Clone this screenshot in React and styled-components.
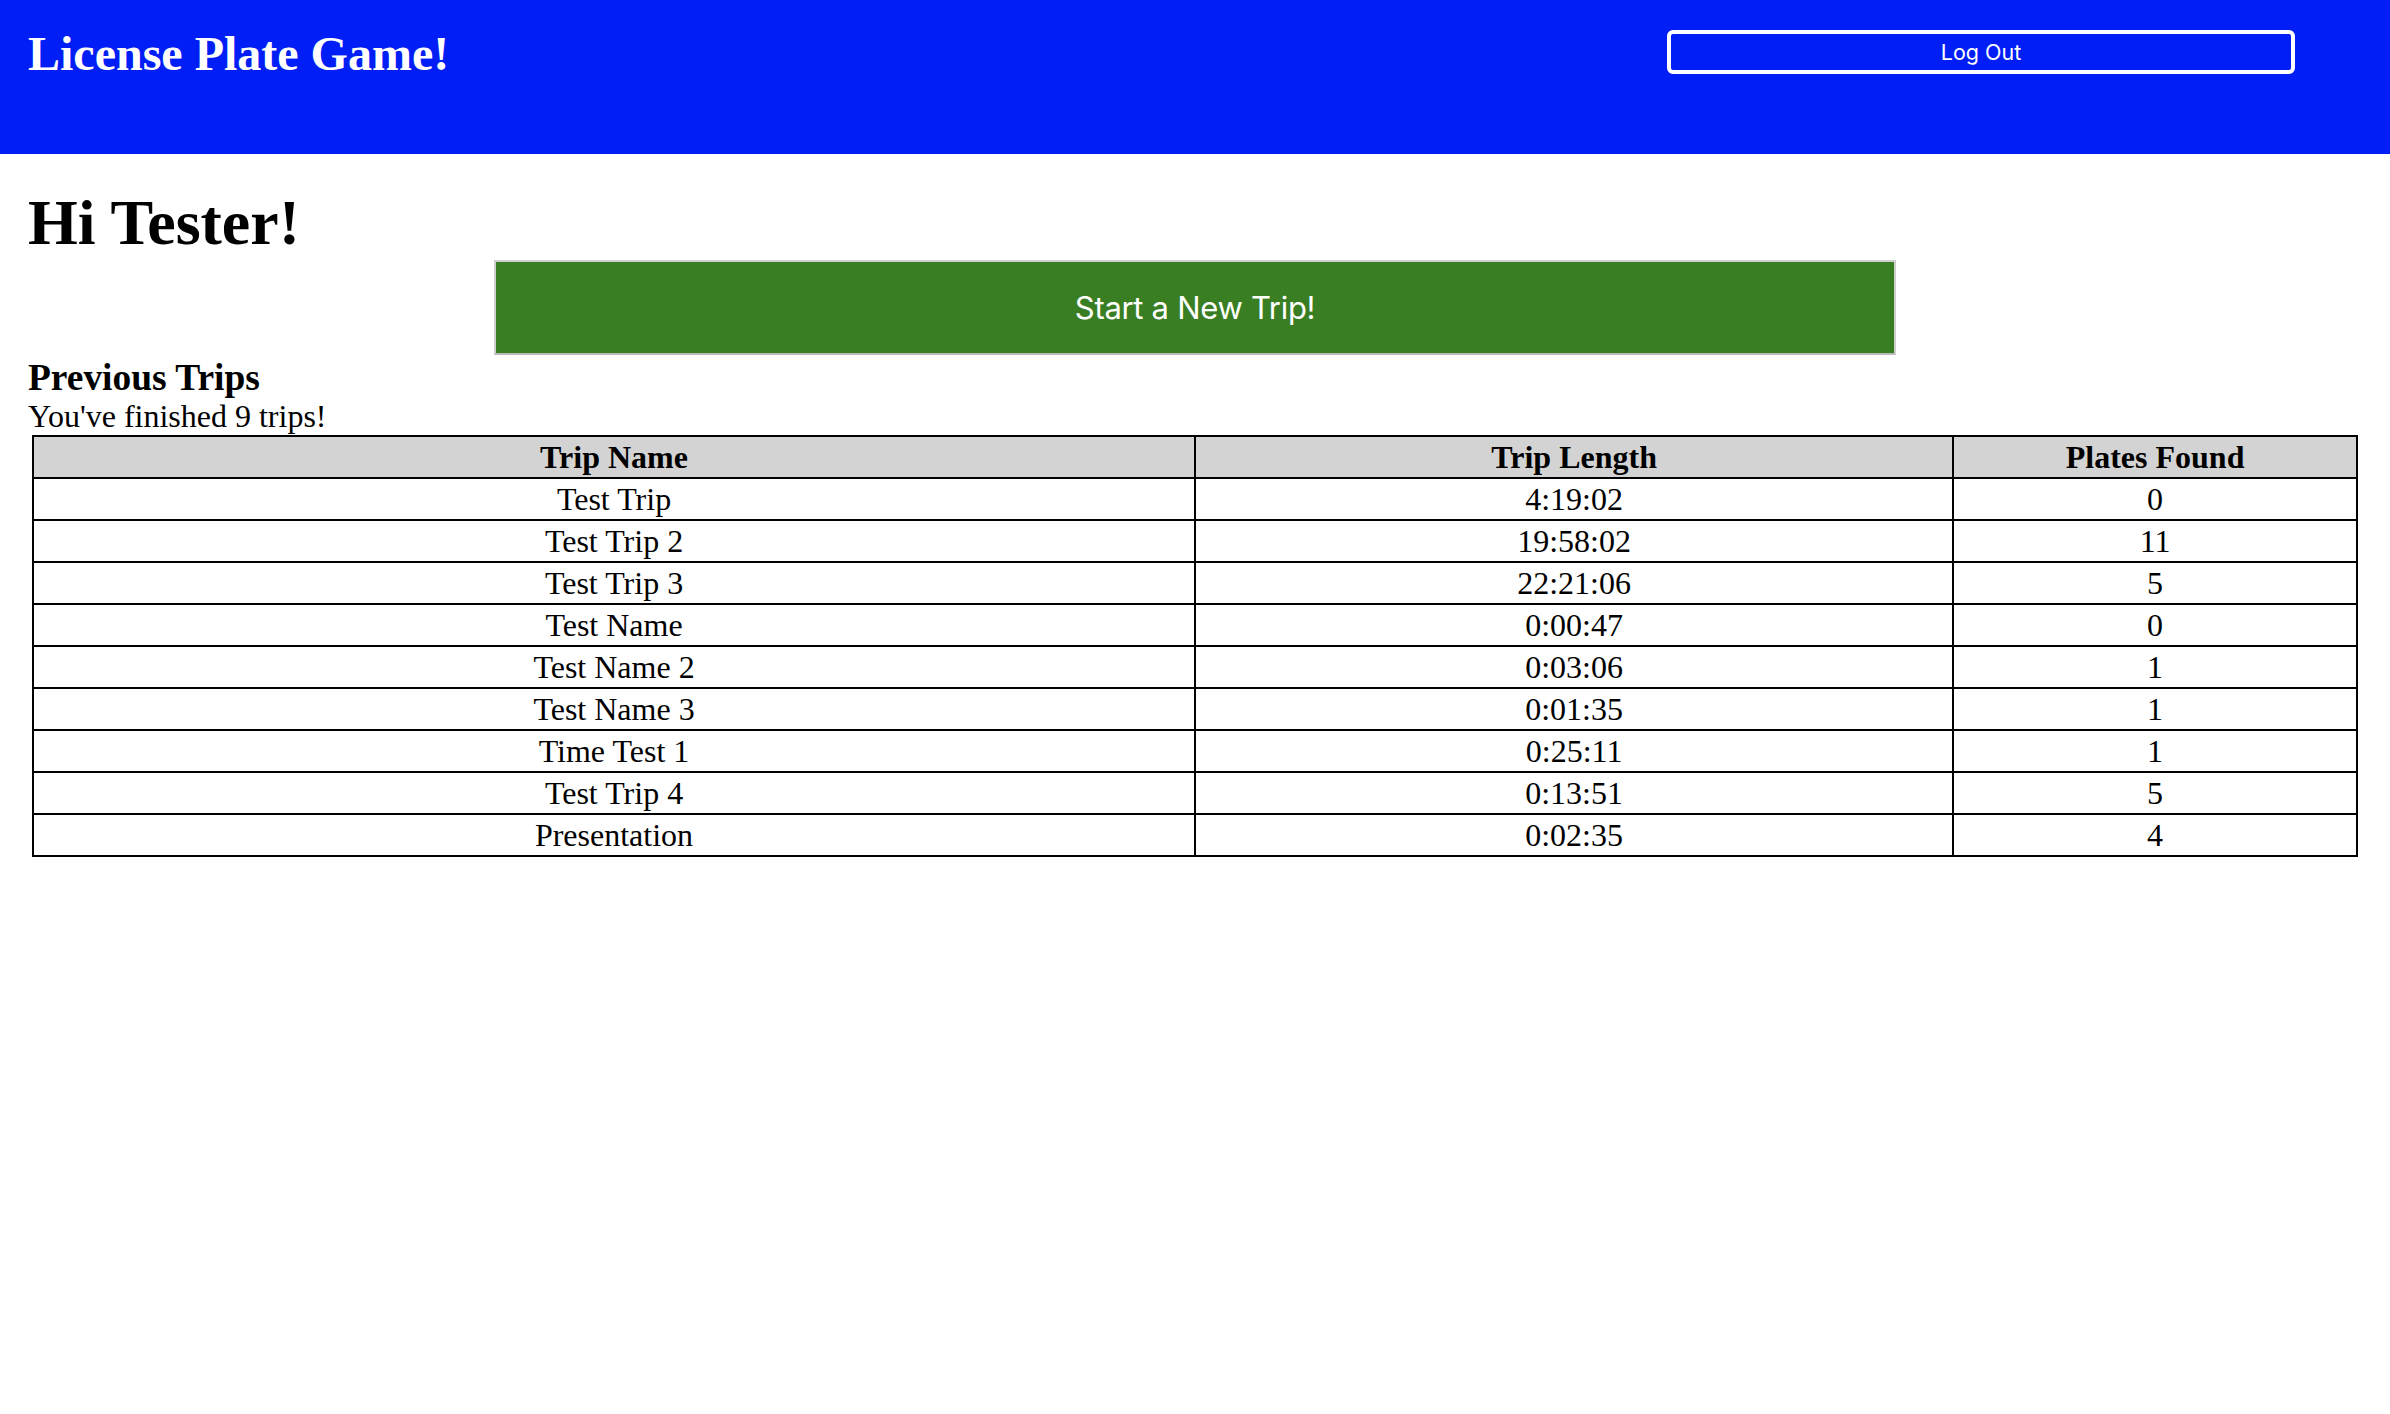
import React from "react";
import styled, { createGlobalStyle } from "styled-components";

const GlobalStyle = createGlobalStyle`
  html, body {
    margin: 0;
    padding: 0;
    background: #ffffff;
    font-family: "Liberation Serif", "Times New Roman", serif;
    color: #000000;
  }
`;

const Header = styled.header`
  display: flex;
  justify-content: space-between;
  align-items: flex-start;
  height: 154px;
  box-sizing: border-box;
  padding: 0 95px 0 28px;
  background: #001ef5;
`;

const Title = styled.h2`
  margin: 26px 0 0;
  font-size: 48px;
  font-weight: bold;
  color: #ffffff;
`;

const LogOutButton = styled.button`
  margin-top: 30px;
  width: 628px;
  height: 44px;
  box-sizing: border-box;
  border: 4px solid #ffffff;
  border-radius: 6px;
  background: transparent;
  color: #ffffff;
  font-family: Inter, "Liberation Sans", sans-serif;
  font-size: 21.5px;
  cursor: pointer;
`;

const Main = styled.main`
  padding: 0 28px;
`;

const Greeting = styled.h1`
  margin: 32px 0 0;
  font-size: 64px;
  font-weight: bold;
`;

const StartButton = styled.button`
  display: block;
  margin: 0 auto;
  width: 1402px;
  height: 95px;
  box-sizing: border-box;
  border: 2px solid #cfcfcf;
  border-bottom-color: #b9b9b9;
  background: #397e22;
  color: #ffffff;
  font-family: Inter, "Liberation Sans", sans-serif;
  font-size: 31px;
  letter-spacing: -0.3px;
  cursor: pointer;
`;

const SectionTitle = styled.h3`
  margin: 1px 0 0;
  font-size: 37.44px;
  font-weight: bold;
`;

const Summary = styled.p`
  margin: -1px 0 0;
  font-size: 32px;
`;

const TripTable = styled.table`
  margin: 0 4px;
  width: calc(100% - 8px);
  border-collapse: collapse;
  table-layout: fixed;
  font-size: 32px;
  line-height: 36px;
`;

const HeadCell = styled.th`
  width: ${(p) => p.$w};
  border: 2px solid #000000;
  padding: 2px;
  background: #d3d3d3;
  font-weight: bold;
  text-align: center;
`;

const Cell = styled.td`
  border: 2px solid #000000;
  padding: 2px;
  text-align: center;
`;

const trips = [
  ["Test Trip", "4:19:02", 0],
  ["Test Trip 2", "19:58:02", 11],
  ["Test Trip 3", "22:21:06", 5],
  ["Test Name", "0:00:47", 0],
  ["Test Name 2", "0:03:06", 1],
  ["Test Name 3", "0:01:35", 1],
  ["Time Test 1", "0:25:11", 1],
  ["Test Trip 4", "0:13:51", 5],
  ["Presentation", "0:02:35", 4],
];

export default function App() {
  return (
    <>
      <GlobalStyle />
      <Header>
        <Title>License Plate Game!</Title>
        <LogOutButton>Log Out</LogOutButton>
      </Header>
      <Main>
        <Greeting>Hi Tester!</Greeting>
        <StartButton>Start a New Trip!</StartButton>
        <SectionTitle>Previous Trips</SectionTitle>
        <Summary>You've finished {trips.length} trips!</Summary>
        <TripTable>
          <thead>
            <tr>
              <HeadCell $w="50.13%">Trip Name</HeadCell>
              <HeadCell $w="32.62%">Trip Length</HeadCell>
              <HeadCell $w="17.25%">Plates Found</HeadCell>
            </tr>
          </thead>
          <tbody>
            {trips.map(([name, length, plates]) => (
              <tr key={name}>
                <Cell>{name}</Cell>
                <Cell>{length}</Cell>
                <Cell>{plates}</Cell>
              </tr>
            ))}
          </tbody>
        </TripTable>
      </Main>
    </>
  );
}
